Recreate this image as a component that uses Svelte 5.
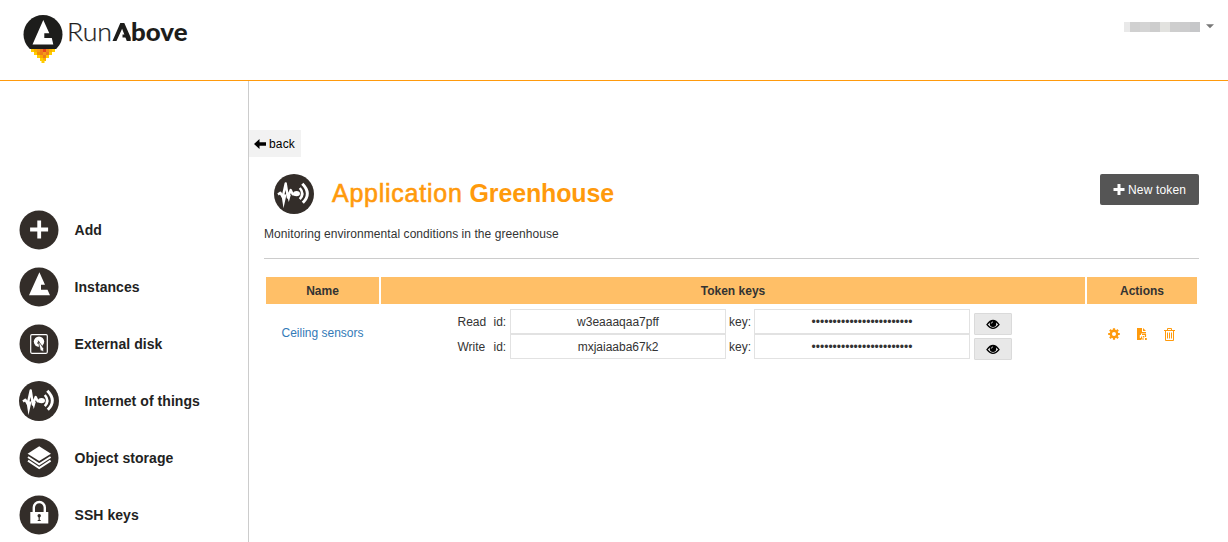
<script lang="ts">
  const menu = [
    { icon: 'add', label: 'Add' },
    { icon: 'instances', label: 'Instances' },
    { icon: 'disk', label: 'External disk' },
    { icon: 'iot', label: 'Internet of things' },
    { icon: 'storage', label: 'Object storage' },
    { icon: 'ssh', label: 'SSH keys' }
  ];
  const tokens = [
    { mode: 'Read', id: 'w3eaaaqaa7pff' },
    { mode: 'Write', id: 'mxjaiaaba67k2' }
  ];
  const blocks = ['#e9e9e9', '#d0d0d0', '#d4d4d4', '#cdcdcd', '#e2e2df', '#cecece', '#cccccd', '#c6c7c9'];
  const blockWidths = [6, 10, 10, 10, 10, 10, 10, 10];
  const flame: [number, number, string][] = [
    [31, 49, '#fc0'], [34, 49, '#f9b000'], [37, 49, '#f39a1a'], [40, 49, '#ee7c1a'], [43, 49, '#e6431f'], [46, 49, '#f08a1a'], [49, 49, '#f9b000'], [52, 49, '#fc0'],
    [34, 52, '#fc0'], [37, 52, '#f39200'], [40, 52, '#ee7c1a'], [43, 52, '#f39a1a'], [46, 52, '#ee7c1a'], [49, 52, '#fc0'],
    [37, 55, '#fc0'], [40, 55, '#f9a800'], [43, 55, '#ee7c1a'], [46, 55, '#fc0'],
    [40, 58, '#fc0'], [43, 58, '#f9b000'], [41.5, 60, '#fc0']
  ];
</script>

{#snippet badge(icon: string)}
  <svg class="badge" viewBox="0 0 40 40" aria-hidden="true">
    <circle cx="20" cy="20" r={icon === 'iot' ? 20 : 19.5} fill="#332d29" />
    {#if icon === 'add'}
      <path d="M18.300 10.500h3.800v7.100h7v3.800h-7v7h-3.800v-7h-7.200v-3.800h7.200z" fill="#fff" />
    {:else if icon === 'instances'}
      <path d="M20.400 5.300 26 17.800h-4v4.900h6.500l2.500 5.600H10z" fill="#fff" />
    {:else if icon === 'disk'}
      <rect x="11.700" y="10.700" width="16.600" height="18.600" rx="1.200" fill="none" stroke="#fff" stroke-width="1.200" />
      <circle cx="20" cy="17.600" r="5.200" fill="#fff" />
      <path d="m19.300 16.800 5.200 7.500.3 3.400-3.500-1.200z" fill="#fff" stroke="#332d29" stroke-width=".8" />
      <path d="M18 19h2" stroke="#332d29" />
    {:else if icon === 'iot'}
      <path d="m4 20.500 2.400-1.700 2.300 4.200 3-13.500 2.200 14 2.800-7.500 2 4.300h4" fill="none" stroke="#fff" stroke-width="2.400" stroke-linejoin="round" />
      <path d="m7.300 20 2.200 14.200L12.600 20l2.200 8 2-7z" fill="#fff" />
      <ellipse cx="22.500" cy="19.600" rx="3.500" ry="2.600" fill="#fff" />
      <path d="M25.800 14q5 5.600 0 11.200" fill="none" stroke="#fff" stroke-width="2.600" />
      <path d="M28.300 9.800q9.800 9.700.5 19" fill="none" stroke="#fff" stroke-width="3" />
    {:else if icon === 'storage'}
      <path d="m20.200 8.300 11.800 7.400-11.800 7.400L8.600 15.700z" fill="#fff" />
      <path d="m9 19 11.200 7.300L31.600 19M9 22.700l11.200 7.300L31.600 22.700" fill="none" stroke="#fff" stroke-width="2" />
    {:else}
      <path d="M11.300 17h18v11.500h-18z" fill="#fff" />
      <path d="M14.800 17v-4.500a5.500 5.500 0 0 1 11 0V17" fill="none" stroke="#fff" stroke-width="2.400" />
      <circle cx="20.200" cy="20.700" r="1.700" fill="#332d29" />
      <path d="M20.200 21v5M18.700 25.500h3" stroke="#332d29" stroke-width="1.200" />
    {/if}
  </svg>
{/snippet}

<div class="page">
  <header>
    <svg class="logo" width="200" height="80" viewBox="0 0 200 80">
      <circle cx="43" cy="34.500" r="19.500" fill="#1d1d1b" />
      <path d="M28 49h30v7H28z" fill="#fff" />
      <path d="m43.300 20 6 13.200h-5v4.800h7.500l1.500 6.500H32.500z" fill="#fff" />
      {#each flame as [x, y, color]}
        <rect {x} {y} width="3" height="3" fill={color} />
      {/each}
      <text x="67" y="41" class="run" textLength="45" lengthAdjust="spacingAndGlyphs">Run</text>
      <path d="M112.500 41 120.300 23h4l6.400 14.500V41h-3.900l-4.700-12.300-5.600 12.300z" fill="#1d1d1b" />
      <path d="M122.500 34.500h5.500v3h-5.500z" fill="#1d1d1b" />
      <text x="131" y="41" class="above" textLength="56.500" lengthAdjust="spacingAndGlyphs">bove</text>
    </svg>
    <div class="account">
      <span class="masked">
        {#each blocks as color, i}
          <i style:background={color} style:width="{blockWidths[i]}px"></i>
        {/each}
      </span>
      <svg width="8" height="5" viewBox="0 0 8 5"><path d="M0 .3h8L4 4.300z" fill="#777" /></svg>
    </div>
  </header>

  <div class="body">
    <nav>
      {#each menu as item}
        <a class:indent={item.icon === 'iot'} href="#top">{@render badge(item.icon)}<span>{item.label}</span></a>
      {/each}
    </nav>

    <main>
      <button class="back">
        <svg width="12" height="10" viewBox="0 0 12 10"><path d="M0 5 5.500 0v3.200H12v3.600H5.500V10z" /></svg>
        <span>back</span>
      </button>

      <div class="content">
        <div class="title">
          {@render badge('iot')}
          <h1><span class="app">Application</span> <b>Greenhouse</b></h1>
          <button class="new">
            <svg width="12" height="11" viewBox="0 0 11 11"><path d="M4 0h3v4h4v3H7v4H4V7H0V4h4z" fill="#fff" /></svg>
            <span>New token</span>
          </button>
        </div>
        <p>Monitoring environmental conditions in the greenhouse</p>
        <hr />

        <div class="table">
          <div class="th">Name</div>
          <div class="th">Token keys</div>
          <div class="th">Actions</div>
          <div class="name"><a href="#top">Ceiling sensors</a></div>
          <div class="keys">
            {#each tokens as token}
              <div class="key">
                <span class="mode">{token.mode}</span>
                <span class="idlabel">id:</span>
                <span class="field">{token.id}</span>
                <span class="keylabel">key:</span>
                <span class="field dots">{'•'.repeat(24)}</span>
                <button class="eye" aria-label="Show">
                  <svg width="14" height="11" viewBox="0 0 14 11">
                    <path d="M1 5.700Q7-2.700 13 5.700 7 13 1 5.700z" fill="none" stroke="#000" stroke-width="1.300" />
                    <circle cx="7" cy="4.800" r="3.200" />
                    <path d="M5.300 4.600q0-1.600 1.700-1.700" fill="none" stroke="#e7e7e7" stroke-width=".8" />
                  </svg>
                </button>
              </div>
            {/each}
          </div>
          <div class="actions">
            <svg width="12" height="12" viewBox="0 0 12 12">
              <circle cx="6" cy="6" r="3.200" fill="none" stroke="#ff9a0c" stroke-width="2.400" />
              <path d="M6 .2v2M6 9.800v2M.2 6h2M9.800 6h2M1.900 1.900l1.400 1.400M8.700 8.700l1.400 1.400M10.100 1.900 8.700 3.300M3.300 8.700l-1.400 1.400" stroke="#ff9a0c" stroke-width="2.200" />
            </svg>
            <svg width="10" height="12" viewBox="0 0 10 12">
              <path d="M0 0h5v4h4v1.500H4V7H2.800v3H4v2H0z" fill="#ff9a0c" /><path d="m6 0 3 3H6z" fill="#ff9a0c" />
              <path d="M5 6.500h3.500V9M4.500 8.500v2.500H7" fill="none" stroke="#ff9a0c" stroke-width="1.200" />
              <path d="M8 10h1.800v2H8zM5.800 8h1.500v1.500H5.800z" fill="#ff9a0c" />
            </svg>
            <svg width="11" height="13" viewBox="0 0 11 13">
              <path d="M0 2.500h11M3.500 2.500v-2h4v2M1.500 2.500v10h8v-10M3.500 4.500v6M5.500 4.500v6M7.500 4.500v6" fill="none" stroke="#ff9a0c" />
            </svg>
          </div>
        </div>
      </div>
    </main>
  </div>
</div>

<style>
  :global(body) { overflow: hidden; background: #fff; }
  .page { width: 1228px; height: 542px; overflow: hidden; font: 12px/17px "Liberation Sans", Arial, sans-serif; color: #333; }
  svg { display: block; flex: none; }
  a { text-decoration: none; }
  button { font: inherit; padding: 0; margin: 0; border: 0; box-sizing: border-box; display: flex; align-items: center; }
  button span { padding-top: 1px; }
  header { box-sizing: border-box; height: 81px; border-bottom: 1px solid #ff9a0c; display: flex; justify-content: space-between; }
  .run { font: 300 25px Lato, sans-serif; fill: #1d1d1b; stroke: #1d1d1b; stroke-width: .25px; }
  .above { font: 900 25px Lato, sans-serif; fill: #1d1d1b; }
  .account { display: flex; gap: 6px; padding: 22px 14px 0 0; align-items: flex-start; }
  .account svg { margin-top: 2px; }
  .masked { display: flex; height: 10px; }
  .masked i { height: 10px; }
  .body { display: flex; height: 461px; }
  nav { box-sizing: border-box; width: 249px; border-right: 1px solid #ccc; padding: 129px 0 0 19px; }
  nav a { display: flex; align-items: center; height: 40px; margin-bottom: 17px; color: #222; font-weight: bold; font-size: 14px; gap: 15.5px; letter-spacing: .06px; }
  nav a.indent { gap: 25.5px; }
  .badge { width: 40px; height: 40px; }
  main { flex: 1; padding-top: 49px; }
  .back { width: 52px; height: 27px; padding-left: 5px; gap: 3px; background: #f2f2f2; color: #000; letter-spacing: .15px; }
  .content { padding: 17px 29px 0 15px; }
  .title { display: flex; align-items: center; height: 40px; padding-left: 10px; }
  h1 { margin: -2px 0 0 18px; font-size: 25px; line-height: 30px; font-weight: normal; color: #ff9a0c; flex: 1; white-space: nowrap; }
  .app { -webkit-text-stroke: .6px #ff9a0c; letter-spacing: .75px; }
  h1 b { letter-spacing: -.15px; }
  .new { width: 99px; height: 31px; background: #555; color: #fff; border-radius: 2px; padding-left: 13px; gap: 3px; margin-top: -9px; white-space: nowrap; letter-spacing: .15px; }
  p { margin: 12px 0 15px; letter-spacing: .06px; }
  hr { border: 0; height: 1px; background: #ccc; margin: 0; }
  .table { display: grid; grid-template-columns: 113px 704px 110px; column-gap: 2px; margin: 18px 0 0 2px; }
  .th { box-sizing: border-box; background: #ffbf67; height: 27px; padding-top: 1px; line-height: 26px; text-align: center; font-weight: bold; }
  .th:first-child, .th:nth-child(3) { line-height: 27px; }
  .th { line-height: 27px; }
  .name { text-align: center; padding-top: 21px; }
  .name a { color: #337ab7; }
  .keys { padding: 5px 0 0 76.500px; }
  .key { display: flex; height: 25px; }
  .key span { line-height: 26px; }
  .key .field { line-height: 24px; }
  .mode { width: 36px; }
  .idlabel { width: 16.500px; }
  .field { box-sizing: border-box; width: 216px; height: 25px; border: 1px solid #e2e2e2; text-align: center; }
  .keylabel { width: 28px; text-align: center; }
  .eye { width: 38px; height: 22px; margin: 4px 0 0 4px; border: 1px solid #dadada; border-radius: 1px; background: #e8e8e8; justify-content: center; }
  .actions { display: flex; align-items: center; height: 14px; margin-top: 23px; padding-left: 21px; gap: 17px; }
</style>
